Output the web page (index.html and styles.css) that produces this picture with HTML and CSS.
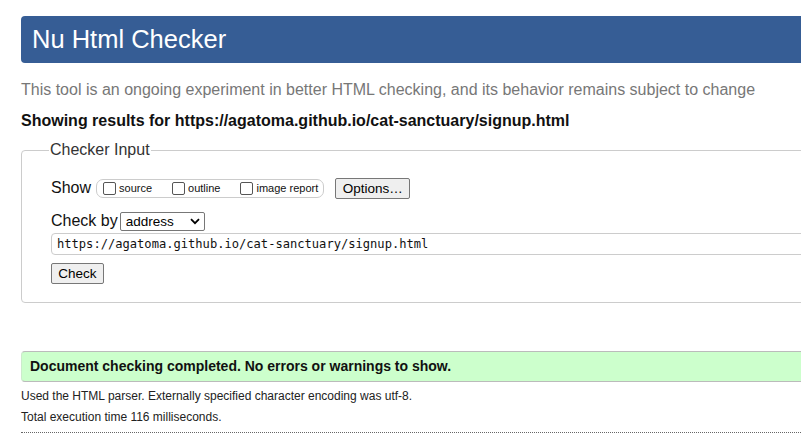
FILE: index.html
```html
<!DOCTYPE html>
<html>
<head>
<meta charset="utf-8">
<link rel="stylesheet" href="styles.css">
</head>
<body>
<div class="page">
  <h1 class="title">Nu Html Checker</h1>
  <p class="intro">This tool is an ongoing experiment in better HTML checking, and its behavior remains subject to change</p>
  <p class="showing">Showing results for https://agatoma.github.io/cat-sanctuary/signup.html</p>
  <fieldset class="checker">
    <legend class="legend">Checker Input</legend>
    <div class="row show-row">
      <span class="label">Show</span>
      <span class="opts">
        <label class="opt"><span class="box"></span>source</label>
        <label class="opt"><span class="box"></span>outline</label>
        <label class="opt"><span class="box"></span>image report</label>
      </span>
      <span class="btn btn-options">Options…</span>
    </div>
    <div class="row by-row">
      <span class="label">Check by</span>
      <span class="select">address<svg class="chev" width="10" height="7" viewBox="0 0 10 7"><path d="M1 1.2 L5 5.2 L9 1.2" fill="none" stroke="#000" stroke-width="1.8"/></svg></span>
    </div>
    <div class="url">https://agatoma.github.io/cat-sanctuary/signup.html</div>
    <div class="row"><span class="btn btn-check">Check</span></div>
  </fieldset>
  <p class="success">Document checking completed. No errors or warnings to show.</p>
  <p class="details">Used the HTML parser. Externally specified character encoding was utf-8.</p>
  <p class="details">Total execution time 116 milliseconds.</p>
  <hr class="dots">
</div>
</body>
</html>
```
FILE: styles.css
```css
html, body { margin: 0; padding: 0; overflow: hidden; background: #fff; }
body { font-family: "Liberation Sans", Arial, sans-serif; color: #000; width: 801px; height: 441px; }
.page { margin: 16px -40px 0 21px; }
.title {
  margin: 0; background: #365d95; color: #fff; font-weight: normal;
  font-size: 25.5px; height: 47px; line-height: 47px; padding-left: 11px;
  border-radius: 4px;
}
.intro { margin: 17px 0 0; font-size: 16px; color: #777; line-height: 20px; }
.showing { margin: 11px 0 0; font-size: 16px; font-weight: bold; color: #111; line-height: 20px; }
.checker {
  margin: 10px 0 0; border: 1px solid #ccc; border-radius: 4px;
  padding: 12px 0 16px 29px; height: 132px; box-sizing: content-box;
}
.legend { font-size: 16px; color: #333; padding: 0 1px; margin-left: -2px; }
.row { display: flex; align-items: center; }
.show-row { margin-top: 6px; height: 22px; }
.label { font-size: 16px; color: #111; }
.opts {
  display: flex; align-items: center; margin-left: 5px; height: 19px;
  border: 1px solid #ccc; border-radius: 7px; padding: 0 5px 0 6px; box-sizing: border-box;
}
.opt { display: flex; align-items: center; font-size: 11px; color: #111; margin-right: 20px; }
.opt:last-child { margin-right: 0; }
.box { width: 13px; height: 13px; box-sizing: border-box; border: 1px solid #555; border-radius: 2px; margin-right: 3px; }
.btn {
  display: inline-flex; align-items: center; justify-content: center;
  background: #efefef; border: 1px solid #777; border-radius: 2px; font-size: 13.5px; color: #000;
  box-sizing: border-box;
}
.btn-options { margin-left: 11px; width: 75px; height: 21px; }
.by-row { margin-top: 12px; height: 20px; }
.select {
  display: inline-flex; align-items: center; justify-content: space-between;
  margin-left: 2px; width: 85px; height: 19px; box-sizing: border-box;
  border: 1px solid #777; border-radius: 2px; font-size: 13.5px; padding: 0 4px 0 5px;
}
.url {
  margin-top: 2px; height: 22px; box-sizing: border-box; line-height: 20px;
  border: 1px solid #ccc; border-radius: 4px; padding-left: 5px;
  font-family: "DejaVu Sans Mono", monospace; font-size: 12.1px; color: #111;
}
.btn-check { margin-top: 8px; width: 53px; height: 21px; }
.success {
  margin: 48px 0 0; background: #ccffcc; border-top: 1px solid #bbb; border-bottom: 1px solid #bbb;
  border-left: 1px solid #ccebcc; border-radius: 4px 0 0 4px;
  font-size: 14px; font-weight: bold; padding-left: 8px; height: 29px; line-height: 29px; color: #111;
}
.details { margin: 7px 0 0; font-size: 12px; line-height: 15px; color: #222; }
.details + .details { margin-top: 6px; }
.dots { margin: 7px 0 0; border: 0; border-top: 1px dotted #666; }
```
